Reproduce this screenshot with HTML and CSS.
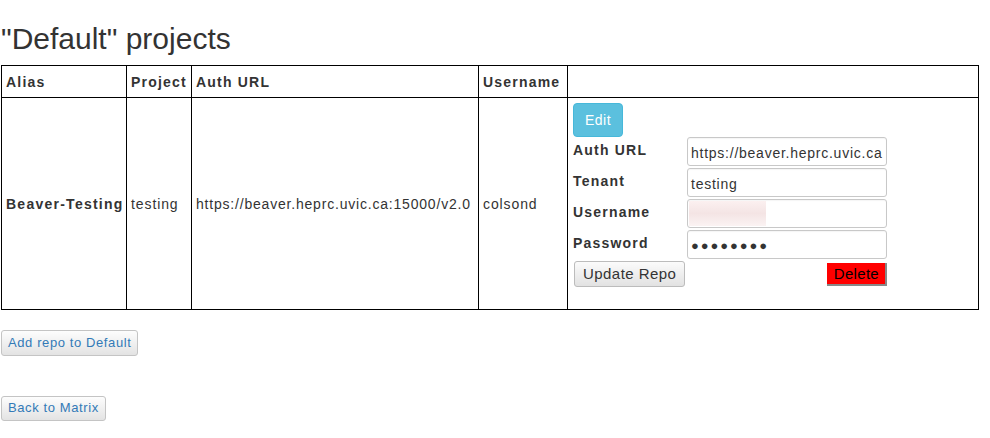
FILE: index.html
```html
<!DOCTYPE html>
<html>
<head>
<meta charset="utf-8">
<link rel="stylesheet" href="styles.css">
</head>
<body>
<h2 class="title">"Default" projects</h2>
<table class="grid">
  <colgroup>
    <col class="c1"><col class="c2"><col class="c3"><col class="c4"><col class="c5">
  </colgroup>
  <thead>
    <tr><th>Alias</th><th>Project</th><th>Auth URL</th><th>Username</th><th></th></tr>
  </thead>
  <tbody>
    <tr>
      <td class="alias">Beaver-Testing</td>
      <td>testing</td>
      <td class="url">https://beaver.heprc.uvic.ca:15000/v2.0</td>
      <td>colsond</td>
      <td class="edit-cell">
        <button class="btn-info">Edit</button>
        <div class="form">
          <label>Auth URL</label><div class="inp">https://beaver.heprc.uvic.ca</div>
          <label>Tenant</label><div class="inp">testing</div>
          <label>Username</label><div class="inp"><span class="blur"></span></div>
          <label>Password</label><div class="inp pw">●●●●●●●●</div>
        </div>
        <div class="actions">
          <button class="btn-update">Update Repo</button>
          <button class="btn-delete">Delete</button>
        </div>
      </td>
    </tr>
  </tbody>
</table>
<div class="below">
  <button class="btn-link">Add repo to Default</button>
</div>
<div class="below2">
  <button class="btn-link back">Back to Matrix</button>
</div>
</body>
</html>
```
FILE: styles.css
```css
html, body { margin: 0; padding: 0; background: #fff; }
body {
  font-family: "Liberation Sans", Arial, sans-serif;
  font-size: 14px;
  line-height: 20px;
  color: #333;
  letter-spacing: 0.9px;
}
.title {
  margin: 22px 0 10px 1px;
  font-size: 30px;
  font-weight: 500;
  line-height: 33px;
  color: #333;
  letter-spacing: 0;
}
.grid {
  border-collapse: collapse;
  margin-left: 1px;
  width: 977px;
  table-layout: fixed;
}
.c1 { width: 125px; }
.c2 { width: 65px; }
.c3 { width: 287px; }
.c4 { width: 89px; }
.c5 { width: 411px; }
.grid th, .grid td {
  border: 1px solid #000;
  padding: 5px 4px;
  text-align: left;
  vertical-align: middle;
  white-space: nowrap;
  overflow: visible;
}
.grid th { font-weight: bold; padding: 6px 4px 5px; letter-spacing: 1.2px; }
.alias { font-weight: bold; letter-spacing: 1.25px; }
.url { letter-spacing: 0.8px; }
.edit-cell { padding: 5px 5px 22px 5px !important; vertical-align: top; }
.btn-info {
  display: block;
  font-family: inherit;
  font-size: 14px;
  line-height: 20px;
  letter-spacing: 0.5px;
  padding: 6px 11px 6px;
  color: #fff;
  background: #5bc0de;
  border: 1px solid #46b8da;
  border-radius: 4px;
}
.form {
  display: grid;
  grid-template-columns: 114px 200px;
  row-gap: 2px;
  margin-top: 0;
}
.form label {
  font-weight: bold;
  font-size: 14px;
  letter-spacing: 1.2px;
  line-height: 22px;
  padding-top: 2px;
}
.inp {
  box-sizing: border-box;
  height: 29px;
  border: 1px solid #c8c8c8;
  border-radius: 3px;
  padding: 4px 3px 2px;
  font-size: 14px;
  letter-spacing: 0.75px;
  line-height: 22px;
  color: #333;
  overflow: hidden;
  white-space: nowrap;
  box-shadow: inset 0 1px 1px rgba(0,0,0,0.04);
}
.pw { font-size: 13px; letter-spacing: 1.9px; padding-left: 3px; }
.blur {
  display: block;
  width: 77px;
  height: 25px;
  margin: -3px 0 0 -2px;
  background: linear-gradient(180deg, #fbf0f0, #f4e4e4 50%, #fbf3f3);
}
.actions {
  display: flex;
  justify-content: space-between;
  align-items: flex-start;
  width: 314px;
  margin-top: 2px;
}
.btn-update {
  font-family: inherit;
  font-size: 15px;
  line-height: 18px;
  letter-spacing: 0.45px;
  padding: 3px 8px;
  color: #333;
  background: linear-gradient(#fbfbfb, #e2e2e2);
  border: 1px solid #bcbcbc;
  border-radius: 3px;
  margin-left: 1px;
}
.btn-delete {
  font-family: inherit;
  font-size: 15px;
  line-height: 18px;
  letter-spacing: 0.3px;
  padding: 2px 6px 1px 7px;
  margin-top: 2px;
  color: #000;
  background: #ff0000;
  border-width: 0 2px 2px 0;
  border-style: solid;
  border-color: #888;
}
.below { margin-top: 20px; }
.below2 { margin-top: 40px; }
.btn-link {
  display: block;
  font-family: inherit;
  font-size: 13px;
  line-height: 16px;
  letter-spacing: 0.6px;
  padding: 4px 6px;
  margin-left: 1px;
  color: #337ab7;
  background: linear-gradient(#fdfdfd, #e3e3e3);
  border: 1px solid #c4c4c4;
  border-radius: 3px;
}
.back { padding: 3px 6px 4px; }
```
